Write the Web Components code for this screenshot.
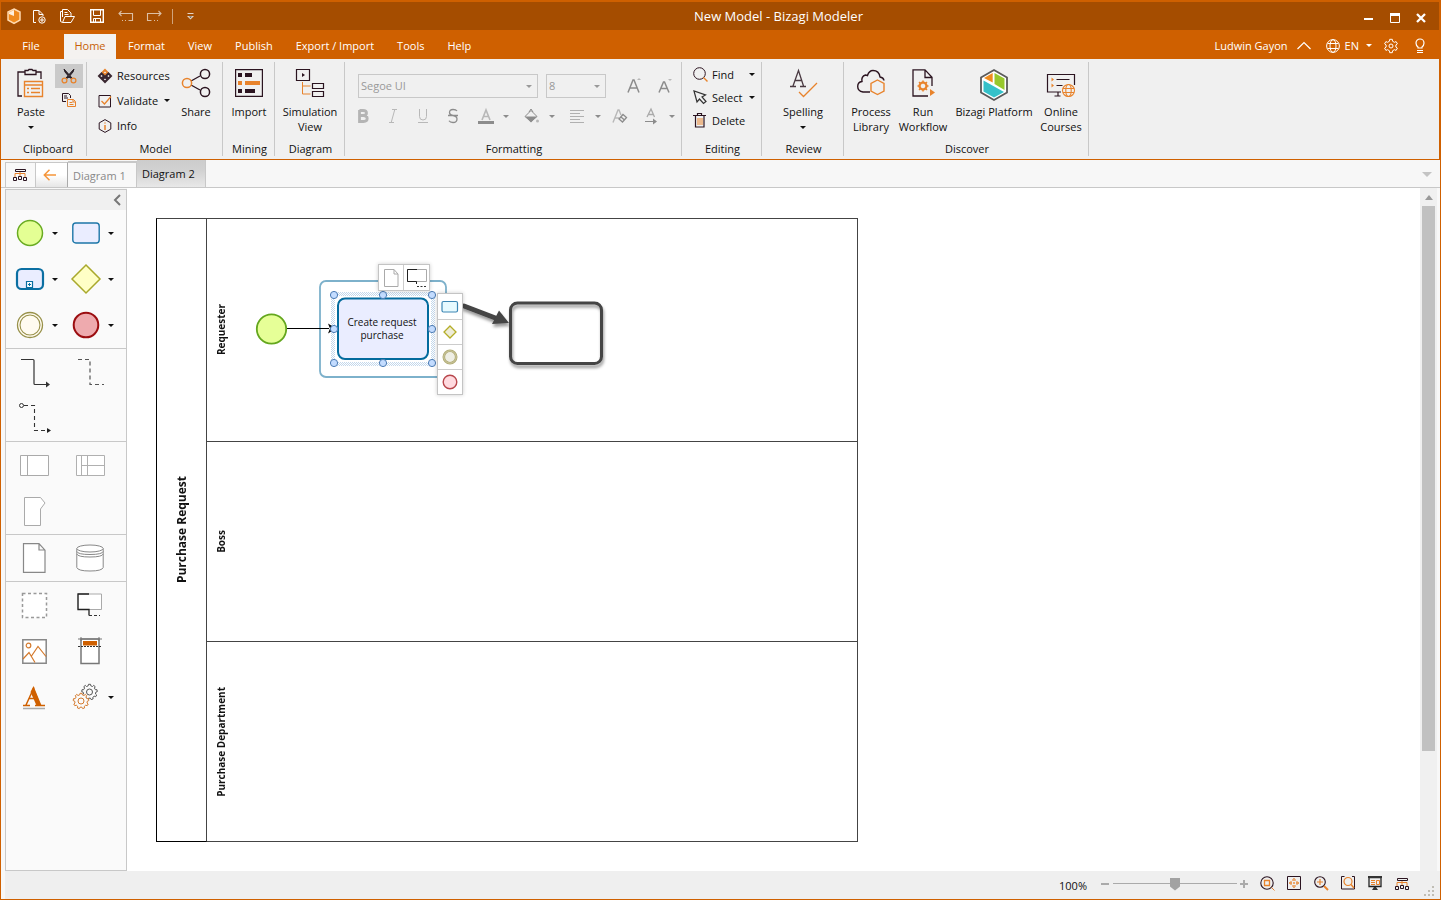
<!DOCTYPE html>
<html lang="en">
<head>
<meta charset="utf-8">
<title>New Model - Bizagi Modeler</title>
<style>
  html, body { margin: 0; height: 100%; }
  body {
    font-family: "Open Sans", "Noto Sans", sans-serif;
    font-size: 11px;
    line-height: 15px;
    color: #111;
    --orange: #cf6000;
    --orange-dark: #a54d00;
    --panel: #f0f0f0;
    --line: #c8c8c8;
  }
</style>
</head>
<body>
<app-window></app-window>

<script>
/* ---------- icon set: [width, height, markup] ---------- */
const D = '#2b1420', O = '#e8832c', G = '#8c8c8c', L = '#b8b8b8';
const gearPath = (cx, cy, r, n, d) => {
  let p = '';
  for (let i = 0; i < n; i++) {
    [[-0.32, r], [-0.2, r + d], [0.2, r + d], [0.32, r]].forEach(([o, q], k) => {
      const a = (i + o * 0.9) * 2 * Math.PI / n;
      p += (i || k ? 'L' : 'M') + (cx + q * Math.sin(a)).toFixed(1) + ' ' + (cy - q * Math.cos(a)).toFixed(1);
    });
  }
  return p + 'z';
};
const ICONS = {
  caret: [6, 3, `<path d="M0 0h6L3 3z" fill="currentColor"/>`],
  logo: [16, 16, `<path d="M8 1l6 3v8l-6 3.500-6-3.500V4z" fill="#f08c22" stroke="#ffd9ae" stroke-width="1.500"/><path d="M3 4.500L8 2v6L3 6z" fill="#fff0dc"/><path d="M8 2.500l5 2.500v6.500L8 14l-5-2.500V7l5 2z" fill="#ef8a1d"/>`],
  newdoc: [14, 15, `<path d="M4 13.500H1.500V1.500H7l4 4V7M7 1.500v4h4" fill="none" stroke="#fff"/><circle cx="10" cy="11" r="3.200" fill="none" stroke="#fff"/><path d="M10 9v4M8 11h4" stroke="#fff"/>`],
  open: [15, 14, `<path d="M2.500 13.500L.5 12.500V2.500h2M2.500 8V.5h5l3.500 3.500v3M4.500 3.500h3M4.500 5.500h4M2.500 13.500l2.500-6h9.500l-3.500 6z" fill="none" stroke="#fff"/>`],
  save: [14, 14, `<path d="M.7.7h12.600v12.600H.7z" fill="none" stroke="#fff" stroke-width="1.400"/><path d="M3.500 1v5.500h7V1M3.500 13V9.500h7V13M5.500 10v3" fill="none" stroke="#fff"/>`],
  undo: [16, 12, `<path d="M3.500 1L1 3.500 3.500 6M1 3.500h13.500v7h-4M8 10.500H7M5 10.500H4" fill="none" stroke="#dcbfa4" stroke-width="1.100"/>`],
  redo: [16, 12, `<path d="M12.500 1L15 3.500 12.500 6M15 3.500H1.500v7h4M8 10.500h1M11 10.500h1" fill="none" stroke="#dcbfa4" stroke-width="1.100"/>`],
  qat: [7, 7, `<path d="M.5.5h6" stroke="#e6d3c4"/><path d="M0 3h7L3.500 6.500z" fill="#e6d3c4"/><path d="M2 3.500h3L3.500 5z" fill="#455"/>`],
  min: [10, 10, `<path d="M0 5h9v2H0z" fill="#fff"/>`],
  max: [10, 10, `<path d="M.5.5h9v9h-9z" fill="none" stroke="#fff"/><path d="M0 0h10v3H0z" fill="#fff"/>`],
  close: [10, 10, `<path d="M1 1l8 8M9 1L1 9" stroke="#fff" stroke-width="2.300"/>`],
  up: [14, 9, `<path d="M.5 8L7 1.500 13.500 8" fill="none" stroke="#fff" stroke-width="1.200"/>`],
  globe: [14, 14, `<g fill="none" stroke="#fff"><circle cx="7" cy="7" r="6.400"/><ellipse cx="7" cy="7" rx="3" ry="6.400"/><path d="M1.500 4.500h11M1.500 9.500h11"/></g>`],
  gear: [16, 16, `<path d="${gearPath(8, 8, 5, 6, 1.8)}" fill="none" stroke="#fff"/><circle cx="8" cy="8" r="2" fill="none" stroke="#fff"/>`],
  bulb: [10, 16, `<path d="M3 10V9Q1 7.500 1 5a4 4 0 0 1 8 0q0 2.500-2 4v1z" fill="none" stroke="#fff" stroke-width="1.200"/><path d="M2 12.500h6M2 14.500h6" stroke="#fff"/>`],
  paste: [28, 28, `<path d="M5 27H1V3h7M19 3h5v7M8 1.500h3l1-1h3l1 1h3v4H8z" fill="none" stroke="${D}" stroke-width="1.300"/><path d="M7.500 12.500h18v15h-18zM7.500 16h18" fill="none" stroke="${O}" stroke-width="1.400"/><path d="M10 19.500h2M14 19.500h9M10 23.500h2M14 23.500h9" stroke="${O}" stroke-width="1.500"/>`],
  cut: [16, 16, `<path d="M3 1l1 3 5 6h2L7.500 6zM13 1l-1 3-5 6H5l3.500-4z" fill="#2a2128" stroke="#2a2128"/><circle cx="3.500" cy="12.500" r="2.400" fill="none" stroke="${O}" stroke-width="1.300"/><circle cx="12.500" cy="12.500" r="2.400" fill="none" stroke="${O}" stroke-width="1.300"/>`],
  copy: [14, 14, `<path d="M4 8.500H.5v-8h6L8.500 2.500V5M2 3h3M2 5h4" fill="none" stroke="${D}"/><path d="M5.500 6.500h6l2 2v5h-8zM7.500 9.500h3M7.500 11.500h4M11 6.500v2.500h2" fill="none" stroke="${O}"/>`],
  resources: [14, 14, `<g fill="none" stroke-width="2"><path d="M7 1l2.500 2.500L7 6 4.500 3.500z" stroke="${O}"/><path d="M3.500 4.500L6 7 3.500 9.500 1 7zM10.500 4.500L13 7l-2.500 2.500L8 7zM7 8l2.500 2.500L7 13l-2.500-2.500z" stroke="#3a2730"/></g>`],
  validate: [14, 14, `<path d="M1 1.500h11.500V13H1z" fill="none" stroke="${D}"/><path d="M3.500 7l3 3L13 2.500" fill="none" stroke="${O}" stroke-width="1.300"/>`],
  info: [14, 14, `<path d="M7 .6l5.800 3.300v6.200L7 13.400 1.200 10.100V3.900z" fill="none" stroke="${D}"/><path d="M7 3.500v1M7 6v5" stroke="${O}" stroke-width="1.500"/>`],
  share: [30, 28, `<path d="M10 12l9-5M10 16l9 5" stroke="${D}" stroke-width="1.300"/><circle cx="6" cy="14" r="4.600" fill="none" stroke="${O}" stroke-width="1.500"/><g fill="none" stroke="${D}" stroke-width="1.500"><circle cx="24" cy="5" r="4.600"/><circle cx="24" cy="23" r="4.600"/></g>`],
  import: [28, 28, `<path d="M.6.600h26.800v26.800H.6z" fill="none" stroke="${D}" stroke-width="1.200"/><path d="M3 4h4v4H3zM10 4h7v4h-7zM3 20h4v4H3zM10 20h10v4H10z" fill="${D}"/><path d="M3 12h4v4H3zM10 12h15v4H10z" fill="${O}"/>`],
  simulation: [28, 28, `<path d="M.5.5h13v11H.5zM16.500 14.500h11v5h-11zM16.500 22.500h11v5h-11z" fill="none" stroke="${D}" stroke-width="1.200"/><path d="M6 4l3 2-3 2z" fill="${D}"/><path d="M6.500 13v12h8M6.500 17h8" fill="none" stroke="${O}"/>`],
  grow: [14, 16, `<path d="M1 14.500L6 2h1l5 12.500M3 10h7" fill="none" stroke="${G}" stroke-width="1.500"/><path d="M10 2h4l-2-2z" fill="${L}"/>`],
  shrink: [14, 16, `<path d="M1 14.500L5.500 4h1L11 14.500M3 10.500h6" fill="none" stroke="${G}" stroke-width="1.500"/><path d="M10 1h4l-2 2z" fill="${L}"/>`],
  bold: [12, 16, `<path d="M2.500 2.500H6Q9.500 2.500 9.500 5T6 7.500H2.500M2.500 7.500H6.500Q10.200 7.500 10.200 10.500T6.500 13.500H2.500V2" fill="none" stroke="#b4b4b4" stroke-width="2.800"/>`],
  italic: [12, 16, `<path d="M5 1.500h5M2 14.500h5M7.800 1.500L4.200 14.500" fill="none" stroke="${L}"/>`],
  underline: [12, 16, `<path d="M2.500 1v7.500q0 3.500 3.500 3.500t3.500-3.500V1M1 14.500h10" fill="none" stroke="${L}"/>`],
  strike: [12, 16, `<path d="M10 3Q9 1.500 6 1.500 2.500 1.500 2.500 4.500 2.500 7 6 7.500q4 .8 4 3.500 0 3.500-4 3.500-3 0-4-1.800M1 7.500h10" fill="none" stroke="${G}" stroke-width="1.300"/>`],
  fontcolor: [16, 16, `<path d="M4 12L8 2l4 10M5.500 8.500h5" fill="none" stroke="${L}" stroke-width="1.600"/><path d="M0 13h16v3H0z" fill="${G}"/>`],
  fill: [16, 16, `<path d="M1 8.500l6-6 6 6-6 5z" fill="none" stroke="${G}"/><path d="M1 8.500h12l-6 6z" fill="${G}"/><path d="M5 4l2-3 2 3" fill="none" stroke="${G}"/><circle cx="13.500" cy="13" r="1.500" fill="${L}"/>`],
  align: [14, 16, `<path d="M0 2.500h14M0 5.500h10M0 8.500h14M0 11.500h10M0 14.500h14" stroke="#b0b0b0"/>`],
  clearfmt: [16, 16, `<path d="M1 14.500L6 2l1 0 2 5M3 10h4" fill="none" stroke="${L}" stroke-width="1.400"/><path d="M7 11l4-4.500 3.500 3-4 4.500zM9 9l3.500 3" fill="none" stroke="${G}" stroke-width="1.300"/>`],
  direction: [14, 16, `<path d="M3 9L7 1l3.500 8M4.500 6.500h5" fill="none" stroke="#aaa" stroke-width="1.300"/><path d="M1 13h8v-2.500l4 3-4 3V14H1z" fill="${G}"/>`],
  find: [15, 15, `<circle cx="6.500" cy="6.500" r="5.800" fill="none" stroke="${D}"/><path d="M10.500 10.500l4 4" stroke="${O}" stroke-width="1.500"/>`],
  select: [15, 15, `<path d="M1 1l3 11 2.500-3 4 4.500 2.500-2-4-4.500 3.500-2z" fill="none" stroke="#333" stroke-width="1.200"/>`],
  delete: [14, 15, `<path d="M0 2.500h13M4.500 2V.5h4V2M2.500 2.500v11.500h8.500V2.500" fill="none" stroke="${D}" stroke-width="1.200"/><path d="M5 5v7M7 5v7M9 5v7" stroke="${O}"/>`],
  spelling: [28, 28, `<path d="M1 17.500h6M11 17.500h6M4 17L9.500 1.500 14.500 17M6 11.500h7" fill="none" stroke="#4a3a42" stroke-width="1.300"/><path d="M10 23l4.500 4.500L28 14" fill="none" stroke="${O}" stroke-width="1.300"/>`],
  process: [28, 28, `<path d="M13 23H6Q.7 22 .7 17.500.7 13 5 12.500 4 7.500 8.500 6q1 0 2 .5Q12 1.500 16 1.500q6 0 7 6.500 3.500.5 4 3.500" fill="none" stroke="${D}" stroke-width="1.400"/><path d="M20.500 11l6.500 3.500v7.500l-6.500 3.500-6.500-3.500v-7.500z" fill="#f0f0f0" stroke="${O}" stroke-width="1.400"/>`],
  run: [28, 28, `<path d="M19 27H4V.8h12l7 7.500V17M16 1v7.500h7" fill="none" stroke="${D}" stroke-width="1.300"/><circle cx="14" cy="17" r="3.500" fill="none" stroke="${O}" stroke-width="2.200"/><path d="M14 11.500v11M8.500 17h11M10 13l8 8M18 13l-8 8" stroke="${O}" stroke-width="1.500"/><circle cx="14" cy="17" r="2.300" fill="#f0f0f0"/><path d="M21 20l5 3.500-5 3.500z" fill="${O}"/>`],
  platform: [28, 32, `<path d="M14 1l13 7.500v15L14 31 1 23.500v-15z" fill="#fff" stroke="#5a5a5a" stroke-width="1.800"/><path d="M12.700 4v9.500L4 9z" fill="#f08c1e"/><path d="M14.500 4l10 5.500v11.500l-10-6z" fill="#97c82c"/><path d="M3.500 11.500L24 23l-10 5.500L3.500 22.500z" fill="#35c1c9"/>`],
  courses: [30, 28, `<path d="M15 23H1.500V5.500h27V16M8.500 27h6M12 23v4M10.500 10.500h13M10.500 16.500h6" fill="none" stroke="${D}" stroke-width="1.200"/><path d="M5.500 8.500l2.500 2-2.500 2zM5.500 14.500l2.500 2-2.500 2z" fill="${O}"/><g fill="none" stroke="${O}" stroke-width="1.100"><circle cx="22.500" cy="21.500" r="6"/><ellipse cx="22.500" cy="21.500" rx="2.700" ry="6"/><path d="M17 19.500h11M17 23.500h11"/></g>`],
  tree: [15, 14, `<path d="M2.500 1.500h10v2h-10zM.5 9.500h3v3h-3zM5.500 8.500h3v3h-3zM10.500 9.500h3v3h-3z" fill="none" stroke="${D}"/><path d="M2 9V5.500h10V9M7 4v4" fill="none" stroke="${O}"/>`],
  back: [14, 12, `<path d="M6.500 .8L1.300 6l5.200 5.200M1.500 6H13" fill="none" stroke="#f5953a" stroke-width="1.500"/>`],
  tabsdown: [10, 6, `<path d="M0 0h10L5 5z" fill="#c4c4c4"/>`],
  collapse: [8, 12, `<path d="M7 1L2 6l5 5" fill="none" stroke="#777" stroke-width="2"/>`],
  scrollup: [8, 5, `<path d="M0 5h8L4 0z" fill="#999"/>`],
  start: [28, 28, `<circle cx="14" cy="14" r="12.500" fill="#e4ff94" stroke="#69ab22" stroke-width="1.500"/>`],
  task: [28, 28, `<rect x=".8" y="4" width="26.400" height="20" rx="3" fill="#eaedff" stroke="#1c76a8" stroke-width="1.400"/>`],
  subprocess: [28, 28, `<rect x="1" y="4" width="26" height="20" rx="4.500" fill="#eaedff" stroke="#0b6fa2" stroke-width="2.200"/><path d="M10.500 16.500h6v6h-6z" fill="#fff" stroke="#0b6fa2" stroke-width="1.200"/><path d="M13.500 18v3M12 19.500h3" stroke="#0b6fa2"/>`],
  gateway: [28, 30, `<path d="M14 1l14 14-14 14L0 15z" fill="#ffffc6" stroke="#a9a92c" stroke-width="1.500"/>`],
  intermediate: [28, 28, `<circle cx="14" cy="14" r="12.500" fill="#fffbf0" stroke="#98914a" stroke-width="1.300"/><circle cx="14" cy="14" r="10" fill="#fffbf0" stroke="#98914a" stroke-width="1.100"/>`],
  end: [28, 28, `<circle cx="14" cy="14" r="12.300" fill="#eeaaae" stroke="#9b0d10" stroke-width="2"/>`],
  sequence: [28, 26, `<path d="M1 .5h12q1 0 1 1v23q0 1 1 1h12" fill="none" stroke="#333" stroke-width="1.200"/><path d="M26 22.500l4 3-4 3z" fill="#333"/>`],
  association: [28, 26, `<path d="M2 .5h12v25h14" fill="none" stroke="#555" stroke-width="1.200" stroke-dasharray="4 3"/>`],
  message: [28, 28, `<circle cx="1.500" cy="1.500" r="2" fill="none" stroke="#333"/><path d="M4 1.500h10.500v25H28" fill="none" stroke="#333" stroke-width="1.100" stroke-dasharray="4 3"/><path d="M27 24l4 2.500-4 2.500z" fill="#222"/>`],
  pool: [28, 20, `<path d="M.5.500h28v20H.5zM7.500 1v20" fill="#fff" stroke="#aaa"/>`],
  lane: [28, 20, `<path d="M.5.500h28v20H.5zM5.500 1v20M11.500 1v20M5.500 10.500h23" fill="#fff" stroke="#b0b0b0"/>`],
  phase: [20, 28, `<path d="M.5.500h16l4.500 5.500-4.500 6v16.500H.5z" fill="#fff" stroke="#aaa"/>`],
  document: [22, 30, `<path d="M.5.700h15.500l6 6.500V29.300H.5zM16 .7V7h6" fill="#fff" stroke="#888" stroke-width="1.200"/>`],
  datastore: [28, 28, `<path d="M.8 4.500v19Q2 27 14 27t13.200-3.500v-19" fill="#fff" stroke="#888"/><ellipse cx="14" cy="4.500" rx="13.200" ry="3.500" fill="#fff" stroke="#888"/><path d="M.8 7.500Q2 10.500 14 10.500t13.200-3M.8 10Q2 13 14 13t13.200-3" fill="none" stroke="#888"/>`],
  group: [26, 26, `<rect x="1.500" y="1.500" width="24" height="24" fill="#fff" stroke="#999" stroke-width="1.500" stroke-dasharray="3 2.500"/>`],
  annotation: [26, 24, `<path d="M1 1h23.500v15.500H1z" fill="#fff" stroke="#aaa"/><path d="M12 1H1v15.500h11v6" fill="none" stroke="#222" stroke-width="1.300"/><path d="M12 22.500h11" stroke="#333" stroke-dasharray="3 2"/>`],
  image: [25, 25, `<path d="M.8.8h23.400v23.400H.8z" fill="#fff" stroke="#888" stroke-width="1.500"/><g fill="none" stroke="#d4792c" stroke-width="1.200"><circle cx="6.500" cy="6.500" r="2.300"/><path d="M1 20l6-6.500 6 10M9.500 17L16 7.500l8 10"/></g>`],
  header: [24, 28, `<path d="M3 2h18v24.500H3z" fill="#fff" stroke="#777" stroke-width="1.500"/><path d="M5 4h14v4.500H5z" fill="#cf6000"/><path d="M0 9.500h24" stroke="#333" stroke-dasharray="2 1"/><path d="M0 2h24M3 0v4M21 0v4" stroke="#777"/>`],
  label: [24, 25, `<path d="M1 20.500h7M13 20.500h10M4 20L12 2.500M11 3l7 17M6.500 13.500h8" fill="none" stroke="#cf6000" stroke-width="1.500"/><path d="M11.500 1l8 19.500h-5L8.500 7z" fill="#cf6000"/><path d="M1 23.500h22" stroke="#aaa" stroke-width="1.500"/>`],
  artifacts: [28, 28, `<path d="${gearPath(17.5, 9, 6.3, 9, 1.5)}" fill="none" stroke="#555"/><circle cx="17.500" cy="9" r="3" fill="none" stroke="#555"/><path d="${gearPath(9, 18, 6.3, 9, 1.5)}" fill="#fafafa" stroke="#d4792c"/><circle cx="9" cy="18" r="3" fill="none" stroke="#d4792c"/>`],
  fit: [15, 15, `<circle cx="7" cy="7" r="6.200" fill="none" stroke="${D}" stroke-width="1.100"/><path d="M4.500 4.500h5v5h-5z" fill="none" stroke="${O}" stroke-width="1.300"/><path d="M11.500 11.500l3 3" stroke="${O}"/>`],
  expand: [15, 15, `<path d="M.5.500h13v13H.5z" fill="none" stroke="${D}"/><path d="M7 2v3M7 6v2M7 9v3M2 7h3M9 7h3" stroke="${O}" stroke-width="1.300"/><path d="M5 4h1M8 4h1M5 10h1M8 10h1M4 5v1M4 8v1M10 5v1M10 8v1" stroke="${O}"/>`],
  zoomin: [15, 15, `<circle cx="6" cy="6" r="5.300" fill="none" stroke="${D}" stroke-width="1.100"/><path d="M6 3v6M3 6h6" stroke="${O}" stroke-width="1.200"/><path d="M10 10l4 4" stroke="${O}" stroke-width="2"/>`],
  zoomarea: [15, 15, `<path d="M3.500 .5H.5v12.500H13.500M11 .5h2.500v12.500" fill="none" stroke="${D}"/><circle cx="7" cy="5.500" r="4" fill="none" stroke="${O}" stroke-width="1.200"/><path d="M10 8.500l3 3.500" stroke="${O}" stroke-width="1.500"/>`],
  present: [15, 15, `<path d="M1 1.500h12v9H1z" fill="none" stroke="#222" stroke-width="1.300"/><path d="M0 0h14v2H0zM6 11h2l2 3H4z" fill="#333"/><path d="M3 4.500h4M3 6.500h4M3 8.500h4" stroke="${O}"/><path d="M8.500 4.500h3v4h-3z" fill="none" stroke="${O}"/>`],
  grip: [11, 11, `<path d="M8 0h2v2H8zM4 4h2v2H4zM8 4h2v2H8zM0 8h2v2H0zM4 8h2v2H4zM8 8h2v2H8z" fill="#c0bdb4"/>`],
  'm-doc': [15, 18, `<path d="M.5.500h9.500l4 4.500v12.500H.5zM10 .5V5h4" fill="#fff" stroke="#aaa"/>`],
  'm-note': [20, 18, `<path d="M.5.500h19v12h-19z" fill="#fff" stroke="#aaa"/><path d="M10 .5H.5v12h9V15" fill="none" stroke="#222"/><path d="M10 17.500h9" stroke="#333" stroke-dasharray="2 1.500"/>`],
  'm-task': [18, 14, `<rect x="1" y="1.500" width="15.500" height="10.500" rx="1.500" fill="#e7faff" stroke="#3c86b4" stroke-width="1.200"/>`],
  'm-gate': [14, 14, `<path d="M7 1l6 6-6 6-6-6z" fill="#eeecd8" stroke="#b4ad28" stroke-width="1.300"/>`],
  'm-inter': [16, 16, `<circle cx="8" cy="8" r="6.200" fill="#eeeee4" stroke="#aea871" stroke-width="2.600"/><circle cx="8" cy="8" r="6.200" fill="none" stroke="#d6d3b0" stroke-width=".8"/>`],
  'm-end': [16, 16, `<circle cx="8" cy="8" r="6.800" fill="#ffdadf" stroke="#b8474c" stroke-width="1.400"/>`],
};

/* ---------- base class ---------- */
class UIElement extends HTMLElement {
  connectedCallback() {
    if (this.shadowRoot) return;
    const t = document.createElement('template');
    t.innerHTML = `<style>
      :host { display: block; box-sizing: border-box; }
      * { box-sizing: border-box; }
      button { font: inherit; color: inherit; background: none; border: 0; margin: 0; padding: 0; }
      ${this.css()}</style>${this.html()}`;
    this.attachShadow({ mode: 'open' }).append(t.content.cloneNode(true));
  }
  css() { return ''; }
  html() { return '<slot></slot>'; }
}
const ic = name => `<ui-icon name="${name}"></ui-icon>`;

customElements.define('ui-icon', class extends UIElement {
  css() { return `:host { display: block; flex: none; } svg { display: block; overflow: visible; }`; }
  html() {
    const [w, h, m] = ICONS[this.getAttribute('name')];
    return `<svg width="${w}" height="${h}" viewBox="0 0 ${w} ${h}" aria-hidden="true">${m}</svg>`;
  }
});

/* ---------- title bar ---------- */
customElements.define('title-bar', class extends UIElement {
  css() { return `
    :host { display: flex; align-items: center; height: 28px; margin-top: 1px; background: var(--orange-dark); color: #fff; }
    .quick { display: flex; flex: none; align-items: center; padding-left: 5px; width: 200px; }
    .quick > * { flex: none; }
    .quick button { display: grid; place-items: center; width: 28px; height: 28px; }
    .quick .logo { width: 16px; margin-right: 3px; }
    .quick .wide { width: 29px; }
    .sep { width: 1px; height: 15px; background: #d0a47c; margin-left: 4px; }
    .quick .more { width: 20px; margin-left: 7px; }
    h1 { flex: 1; margin: 0; text-align: center; font-size: 13px; font-weight: 400; line-height: 28px; }
    .win { display: flex; padding-right: 5px; }
    .win button { display: grid; place-items: center; width: 26px; height: 28px; padding-top: 4px; }`; }
  html() { return `
    <div class="quick"><span class="logo">${ic('logo')}</span>
      <button aria-label="New">${ic('newdoc')}</button><button class="wide" aria-label="Open">${ic('open')}</button>
      <button class="wide" aria-label="Save">${ic('save')}</button><button class="wide" aria-label="Undo">${ic('undo')}</button>
      <button aria-label="Redo">${ic('redo')}</button><span class="sep"></span>
      <button class="more" aria-label="Customize">${ic('qat')}</button></div>
    <h1>New Model - Bizagi Modeler</h1>
    <div class="win"><button aria-label="Minimize">${ic('min')}</button><button aria-label="Maximize">${ic('max')}</button><button aria-label="Close">${ic('close')}</button></div>`; }
});

/* ---------- menu bar ---------- */
customElements.define('menu-bar', class extends UIElement {
  css() { return `
    :host { display: flex; align-items: flex-end; height: 29px; background: var(--orange); color: #fff; }
    nav { display: flex; flex: 1; }
    nav button { height: 25px; padding: 0 11px 2px 12px; }
    nav .file { width: 60px; padding: 0 0 3px; margin-right: 3px; }
    nav .active { width: 52px; background: #f4f2f0; color: #c75f08; padding: 0 0 2px; }
    .user { display: flex; align-items: center; height: 25px; padding: 0 14px 2px 0; }
    .user button { display: flex; align-items: center; }
    .name { gap: 9px; margin-right: 15px; }
    .lang { gap: 5px; margin-right: 11px; }
    .lang span + ui-icon { margin-left: 2px; }
    .gear { margin-right: 16px; }`; }
  html() { return `
    <nav><button class="file">File</button><button class="active">Home</button>${
      ['Format', 'View', 'Publish', 'Export / Import', 'Tools', 'Help'].map(t => `<button>${t}</button>`).join('')}</nav>
    <div class="user"><button class="name"><span>Ludwin Gayon</span>${ic('up')}</button>
      <button class="lang">${ic('globe')}<span>EN</span>${ic('caret')}</button>
      <button class="gear" aria-label="Settings">${ic('gear')}</button><button aria-label="Tips">${ic('bulb')}</button></div>`; }
});

/* ---------- ribbon parts ---------- */
customElements.define('ribbon-group', class extends UIElement {
  css() { return `
    :host { display: flex; flex-direction: column; flex: none; border-right: 1px solid var(--line); }
    .body { display: flex; flex: 1; }
    .label { text-align: center; height: 15px; padding-left: var(--label-inset, 2px); }`; }
  html() { return `<div class="body"><slot></slot></div><div class="label">${this.getAttribute('label')}</div>`; }
});
customElements.define('ribbon-big', class extends UIElement {
  css() { return `
    :host { display: block; flex: none; }
    button { display: flex; flex-direction: column; align-items: center; width: 100%; padding-top: 7px; white-space: nowrap; }
    .pic { display: grid; place-items: center; height: 28px; margin-bottom: 7px; }
    .drop { height: 17px; display: grid; place-items: center; }`; }
  html() { return `<button><span class="pic">${ic(this.getAttribute('icon'))}</span><span><slot></slot></span>${
    this.hasAttribute('drop') ? `<span class="drop">${ic('caret')}</span>` : ''}</button>`; }
});
customElements.define('ribbon-small', class extends UIElement {
  css() { return `
    :host { display: block; height: var(--row, 25px); }
    button { display: flex; align-items: center; width: 100%; height: 100%; text-align: left; }
    .pic { width: 14px; margin-right: 5px; }
    .text { flex: 1; }`; }
  html() { return `<button><span class="pic">${ic(this.getAttribute('icon'))}</span><span class="text"><slot></slot></span>${
    this.hasAttribute('drop') ? ic('caret') : ''}</button>`; }
});
customElements.define('format-tools', class extends UIElement {
  css() { return `
    .row { display: flex; align-items: center; }
    .first { padding: 12px 0 0 13px; height: 36px; }
    label { display: grid; align-items: center; margin-right: 8px; }
    label > * { grid-area: 1 / 1; }
    label ui-icon { justify-self: end; margin-right: 6px; color: #999; }
    select { appearance: none; height: 24px; width: 100%; margin: 0; padding: 0 2px 2px; border: 1px solid var(--line); border-radius: 0; background: transparent; font: inherit; color: #999; opacity: 1; }
    .family { width: 180px; } .size { width: 60px; margin-right: 12px; }
    .first button { display: grid; place-items: center; width: 31px; height: 24px; }
    .second { padding-left: 3px; margin-top: 6px; height: 24px; color: ${G}; }
    .second button { display: grid; place-items: center; width: 30px; height: 24px; }
    .second .split { display: flex; align-items: center; gap: 9px; width: 46px; padding-left: 10px; }
    .second .clear { width: 28px; }
    .split ui-icon:first-child { width: 16px; }`; }
  html() {
    const b = (n, l, c = '') => `<button disabled class="${c}" aria-label="${l}">${ic(n)}${c === 'split' ? ic('caret') : ''}</button>`;
    return `<div class="row first">
      <label class="family"><select disabled aria-label="Font"><option>Segoe UI</option></select>${ic('caret')}</label>
      <label class="size"><select disabled aria-label="Font size"><option>8</option></select>${ic('caret')}</label>
      ${b('grow', 'Increase font size')}${b('shrink', 'Decrease font size')}</div>
    <div class="row second">${b('bold', 'Bold')}${b('italic', 'Italic')}${b('underline', 'Underline')}${b('strike', 'Strikethrough')}${
      b('fontcolor', 'Font color', 'split')}${b('fill', 'Fill color', 'split')}${b('align', 'Alignment', 'split')}${b('clearfmt', 'Clear format', 'clear')}${b('direction', 'Text direction', 'split')}</div>`;
  }
});
customElements.define('ribbon-bar', class extends UIElement {
  css() { return `
    :host { display: flex; height: 101px; padding: 3px 0; background: var(--panel); border-bottom: 1px solid var(--orange); line-height: 15px; }
    .clip { width: 86px; --label-inset: 9px; } .model { width: 136px; } .mining { width: 52px; } .diagram { width: 70px; }
    .format { width: 337px; } .edit { width: 80px; } .review { width: 82px; } .discover { width: 245px; }
    .tools { padding-top: 2px; }
    .tools button { display: grid; place-items: center; width: 28px; height: 24px; }
    .tools .on { background: #cacaca; }
    .list { padding-top: 1px; }
    .model .list { padding-left: 11px; width: 84px; }
    .edit .list { padding-left: 11px; width: 73px; --row: 23px; }`; }
  html() { return `
    <ribbon-group class="clip" label="Clipboard">
      <ribbon-big icon="paste" drop style="width:48px;margin-left:6px;margin-right:0">Paste</ribbon-big>
      <div class="tools"><button class="on" aria-label="Cut">${ic('cut')}</button><button aria-label="Copy">${ic('copy')}</button></div>
    </ribbon-group>
    <ribbon-group class="model" label="Model">
      <div class="list"><ribbon-small icon="resources">Resources</ribbon-small><ribbon-small icon="validate" drop>Validate</ribbon-small><ribbon-small icon="info">Info</ribbon-small></div>
      <ribbon-big icon="share" style="width:52px">Share</ribbon-big>
    </ribbon-group>
    <ribbon-group class="mining" label="Mining"><ribbon-big icon="import" style="width:52px">Import</ribbon-big></ribbon-group>
    <ribbon-group class="diagram" label="Diagram"><ribbon-big icon="simulation" style="width:70px">Simulation<br>View</ribbon-big></ribbon-group>
    <ribbon-group class="format" label="Formatting"><format-tools></format-tools></ribbon-group>
    <ribbon-group class="edit" label="Editing">
      <div class="list"><ribbon-small icon="find" drop>Find</ribbon-small><ribbon-small icon="select" drop>Select</ribbon-small><ribbon-small icon="delete">Delete</ribbon-small></div>
    </ribbon-group>
    <ribbon-group class="review" label="Review"><ribbon-big icon="spelling" drop style="width:82px">Spelling</ribbon-big></ribbon-group>
    <ribbon-group class="discover" label="Discover">
      <ribbon-big icon="process" style="width:54px">Process<br>Library</ribbon-big>
      <ribbon-big icon="run" style="width:50px">Run<br>Workflow</ribbon-big>
      <ribbon-big icon="platform" style="width:92px">Bizagi Platform</ribbon-big>
      <ribbon-big icon="courses" style="width:42px">Online<br>Courses</ribbon-big>
    </ribbon-group>`; }
});

/* ---------- diagram tabs ---------- */
customElements.define('tab-strip', class extends UIElement {
  css() { return `
    :host { display: flex; align-items: flex-end; height: 28px; padding-left: 4px; background: #f7f7f7; border-bottom: 1px solid var(--line); }
    button { display: grid; place-items: center; height: 25px; border: 1px solid var(--line); border-bottom: 0; }
    .tree { width: 31px; background: #f8f8f8; }
    .back { width: 32px; padding-right: 4px; background: linear-gradient(#fff 50%, #e6e6e6); border-right-color: #aaa; border-left: 0; }
    .tab { width: 69px; height: 26px; justify-items: start; padding: 0 0 0 5px; color: #888; background: #f8f8f8; border-left: 0; border-top-width: 2px; }
    .tab.on { height: 27px; padding: 0 0 0 5px; color: #111; background: linear-gradient(#ccc, #d2d2d2 40%, #e8e8e8); border-top: 0; }
    .down { margin: 0 8px 9px auto; height: auto; border: 0; }`; }
  html() { return `<button class="tree" aria-label="Diagrams">${ic('tree')}</button><button class="back" aria-label="Back">${ic('back')}</button>
    <button class="tab">Diagram 1</button><button class="tab on">Diagram 2</button><button class="down" aria-label="All tabs">${ic('tabsdown')}</button>`; }
});

/* ---------- shape palette ---------- */
customElements.define('shape-palette', class extends UIElement {
  css() { return `
    :host { flex: none; width: 122px; margin: 1px 0 0 4px; background: #fafafa; border: 1px solid var(--line); }
    header { display: flex; justify-content: flex-end; height: 20px; background: var(--panel); padding-right: 2px; }
    section { display: grid; grid-template-columns: 56px 56px; grid-auto-rows: 46px; border-bottom: 1px solid var(--line); }
    section:last-child { border-bottom: 0; }
    section button { display: flex; align-items: center; padding-left: 14px; }
    section button.drop { padding-left: 10px; gap: 8px; }
    .pic { display: grid; place-items: center; width: 28px; height: 30px; }
    header button { display: grid; place-items: center; width: 14px; }`; }
  html() {
    const rows = [['start*', 'task*', 'subprocess*', 'gateway*', 'intermediate*', 'end*'], ['sequence', 'association', 'message'],
      ['pool', 'lane', 'phase'], ['document', 'datastore'], ['group', 'annotation', 'image', 'header', 'label', 'artifacts*']];
    return `<header><button aria-label="Collapse">${ic('collapse')}</button></header>` + rows.map(r => `<section>${r.map(n => {
      const drop = n.endsWith('*'), k = n.replace('*', '');
      return `<button class="${drop ? 'drop' : ''}" aria-label="${k}"><span class="pic">${ic(k)}</span>${drop ? ic('caret') : ''}</button>`;
    }).join('')}</section>`).join('');
  }
});

/* ---------- diagram ---------- */
customElements.define('swim-lane', class extends UIElement {
  css() { return `
    :host { display: flex; height: 200px; border-bottom: 1px solid #444; }
    :host([tall]) { height: 223px; }
    .name { display: grid; place-items: center; width: 28px; font-weight: 700; }
    .name span { writing-mode: vertical-rl; transform: rotate(180deg); white-space: nowrap; font-size: 10px; line-height: 14px; }`; }
  html() { return `<div class="name"><span>${this.getAttribute('name')}</span></div><slot></slot>`; }
});
customElements.define('flow-nodes', class extends UIElement {
  css() { return `
    :host { position: absolute; left: 83px; top: 31px; width: 380px; height: 160px; }
    svg.art { display: block; }
    .text { position: absolute; left: 97px; top: 48px; width: 90px; height: 62px; display: grid; place-items: center; text-align: center; font-size: 10px; line-height: 13px; }
    .menu { position: absolute; display: flex; background: #fff; border: 1px solid #c4c4c4; box-shadow: 0 0 4px #0003; }
    .menu button { display: grid; place-items: center; width: 24px; height: 25px; }
    .top { left: 138px; top: 14px; } .top button + button { width: 26px; border-left: 1px solid #ccc; }
    .side { left: 197px; top: 43px; flex-direction: column; } .side button + button { border-top: 1px solid #ccc; }`; }
  html() {
    const h = [[334, 295], [383, 295], [432, 295], [334, 329], [432, 329], [334, 363], [383, 363], [432, 363]];
    return `<svg class="art" width="380" height="160" viewBox="240 250 380 160" aria-hidden="true">
      <defs><pattern id="h" width="2" height="2" patternUnits="userSpaceOnUse"><path d="M0 0h1v1H0zM1 1h1v1H1z" fill="#c3d8ec"/></pattern>
      <filter id="s" x="-20%" y="-20%" width="140%" height="150%"><feDropShadow dx="1" dy="3" stdDeviation="1.500" flood-opacity=".4"/></filter></defs>
      <rect x="320" y="281" width="126" height="96" rx="6" fill="none" stroke="#7db1cb" stroke-width="1.800"/>
      <path d="M331 292h104v74H331zM335 296v66h96v-66z" fill="url(#h)" fill-rule="evenodd"/>
      <rect x="338" y="298.500" width="90" height="60.500" rx="7" fill="#eaedff" stroke="#036b9d" stroke-width="2"/>
      <path d="M287 328.500h42" stroke="#000"/><path d="M328 323.500l8 5-8 5 2-5z"/>
      <circle cx="271.500" cy="329" r="14.700" fill="#e6ff97" stroke="#64a71e" stroke-width="1.800"/>
      ${h.map(([x, y]) => `<circle cx="${x}" cy="${y}" r="3.600" fill="#c3dcff" stroke="#4c7cb4"/>`).join('')}
      <g filter="url(#s)"><path d="M464 306l34 13" stroke="#444" stroke-width="5" stroke-linecap="round"/><path d="M499 310.500l10 12.500-17 1z" fill="#444"/>
      <rect x="510.500" y="303" width="91" height="60.500" rx="7" fill="none" stroke="#444" stroke-width="3"/></g></svg>
    <div class="text"><span>Create request<br>purchase</span></div>
    <div class="menu top"><button aria-label="Document">${ic('m-doc')}</button><button aria-label="Annotation">${ic('m-note')}</button></div>
    <div class="menu side"><button aria-label="Task">${ic('m-task')}</button><button aria-label="Gateway">${ic('m-gate')}</button><button aria-label="Event">${ic('m-inter')}</button><button aria-label="End">${ic('m-end')}</button></div>`;
  }
});
customElements.define('diagram-canvas', class extends UIElement {
  css() { return `
    :host { flex: 1; min-width: 0; background: #fff; padding: 30px 29px 20px; }
    .pool { position: relative; display: flex; width: 702px; border: 1px solid #444; border-left-color: #000; border-bottom: 0; }
    .title { display: grid; place-items: center; width: 50px; border-right: 1px solid #444; border-bottom: 1px solid #000; font-size: 12px; font-weight: 700; line-height: 16px; }
    .title span { writing-mode: vertical-rl; transform: rotate(180deg); }
    .lanes { flex: 1; }`; }
  html() { return `<div class="pool"><div class="title"><span>Purchase Request</span></div>
    <div class="lanes"><swim-lane tall name="Requester"></swim-lane><swim-lane name="Boss"></swim-lane><swim-lane name="Purchase Department"></swim-lane></div>
    <flow-nodes></flow-nodes></div>`; }
});
customElements.define('scroll-track', class extends UIElement {
  css() { return `
    :host { display: flex; flex-direction: column; align-items: center; flex: none; width: 17px; margin-right: 3px; background: var(--panel); }
    button { display: grid; place-items: center; height: 18px; width: 17px; }
    .thumb { width: 13px; height: 82%; background: #c1c1c1; }
    .track { flex: 1; width: 13px; }`; }
  html() { return `<button aria-label="Scroll up">${ic('scrollup')}</button><div class="track"><div class="thumb"></div></div>`; }
});

/* ---------- status bar ---------- */
customElements.define('status-bar', class extends UIElement {
  css() { return `
    :host { display: flex; align-items: center; justify-content: flex-end; height: 28px; margin-left: 4px; padding-right: 5px; background: #efefef; }
    label { margin-right: 14px; }
    .step { width: 8px; height: 8px; margin-bottom: 2px; background: linear-gradient(#aaa, #aaa) 0 3px / 8px 2px no-repeat; }
    .plus { background: linear-gradient(#aaa, #aaa) 0 3px / 8px 2px no-repeat, linear-gradient(#aaa, #aaa) 3px 0 / 2px 8px no-repeat; }
    input { appearance: none; width: 124px; height: 14px; margin: 0 3px 2px 4px; background: linear-gradient(#aaa, #aaa) 0 6px / 100% 1px no-repeat; }
    input::-webkit-slider-thumb { appearance: none; width: 10px; height: 13px; background: #a2a2a2; clip-path: polygon(0 0, 100% 0, 100% 70%, 50% 100%, 0 70%); }
    .views { display: flex; margin: 0 8px 3px 6px; }
    .views button { display: grid; place-items: center; width: 27px; height: 20px; }
    .grip { align-self: flex-end; padding-bottom: 2px; }`; }
  html() { return `<label for="z">100%</label><button class="step" aria-label="Zoom out"></button><input id="z" type="range" value="50"><button class="step plus" aria-label="Zoom in"></button>
    <div class="views">${['fit', 'expand', 'zoomin', 'zoomarea', 'present', 'tree'].map(n => `<button aria-label="${n}">${ic(n)}</button>`).join('')}</div><span class="grip">${ic('grip')}</span>`; }
});

/* ---------- window shell ---------- */
customElements.define('app-window', class extends UIElement {
  css() { return `
    :host { display: flex; flex-direction: column; min-height: 100vh; border: 1px solid var(--orange); background: #f8f8f8; }
    .head { background: var(--orange); padding-right: 1px; }
    main { display: flex; flex: 1; }`; }
  html() { return `<div class="head"><title-bar></title-bar><menu-bar></menu-bar><ribbon-bar></ribbon-bar></div>
    <tab-strip></tab-strip><main><shape-palette></shape-palette><diagram-canvas></diagram-canvas><scroll-track></scroll-track></main><status-bar></status-bar>`; }
});
</script>
</body>
</html>
